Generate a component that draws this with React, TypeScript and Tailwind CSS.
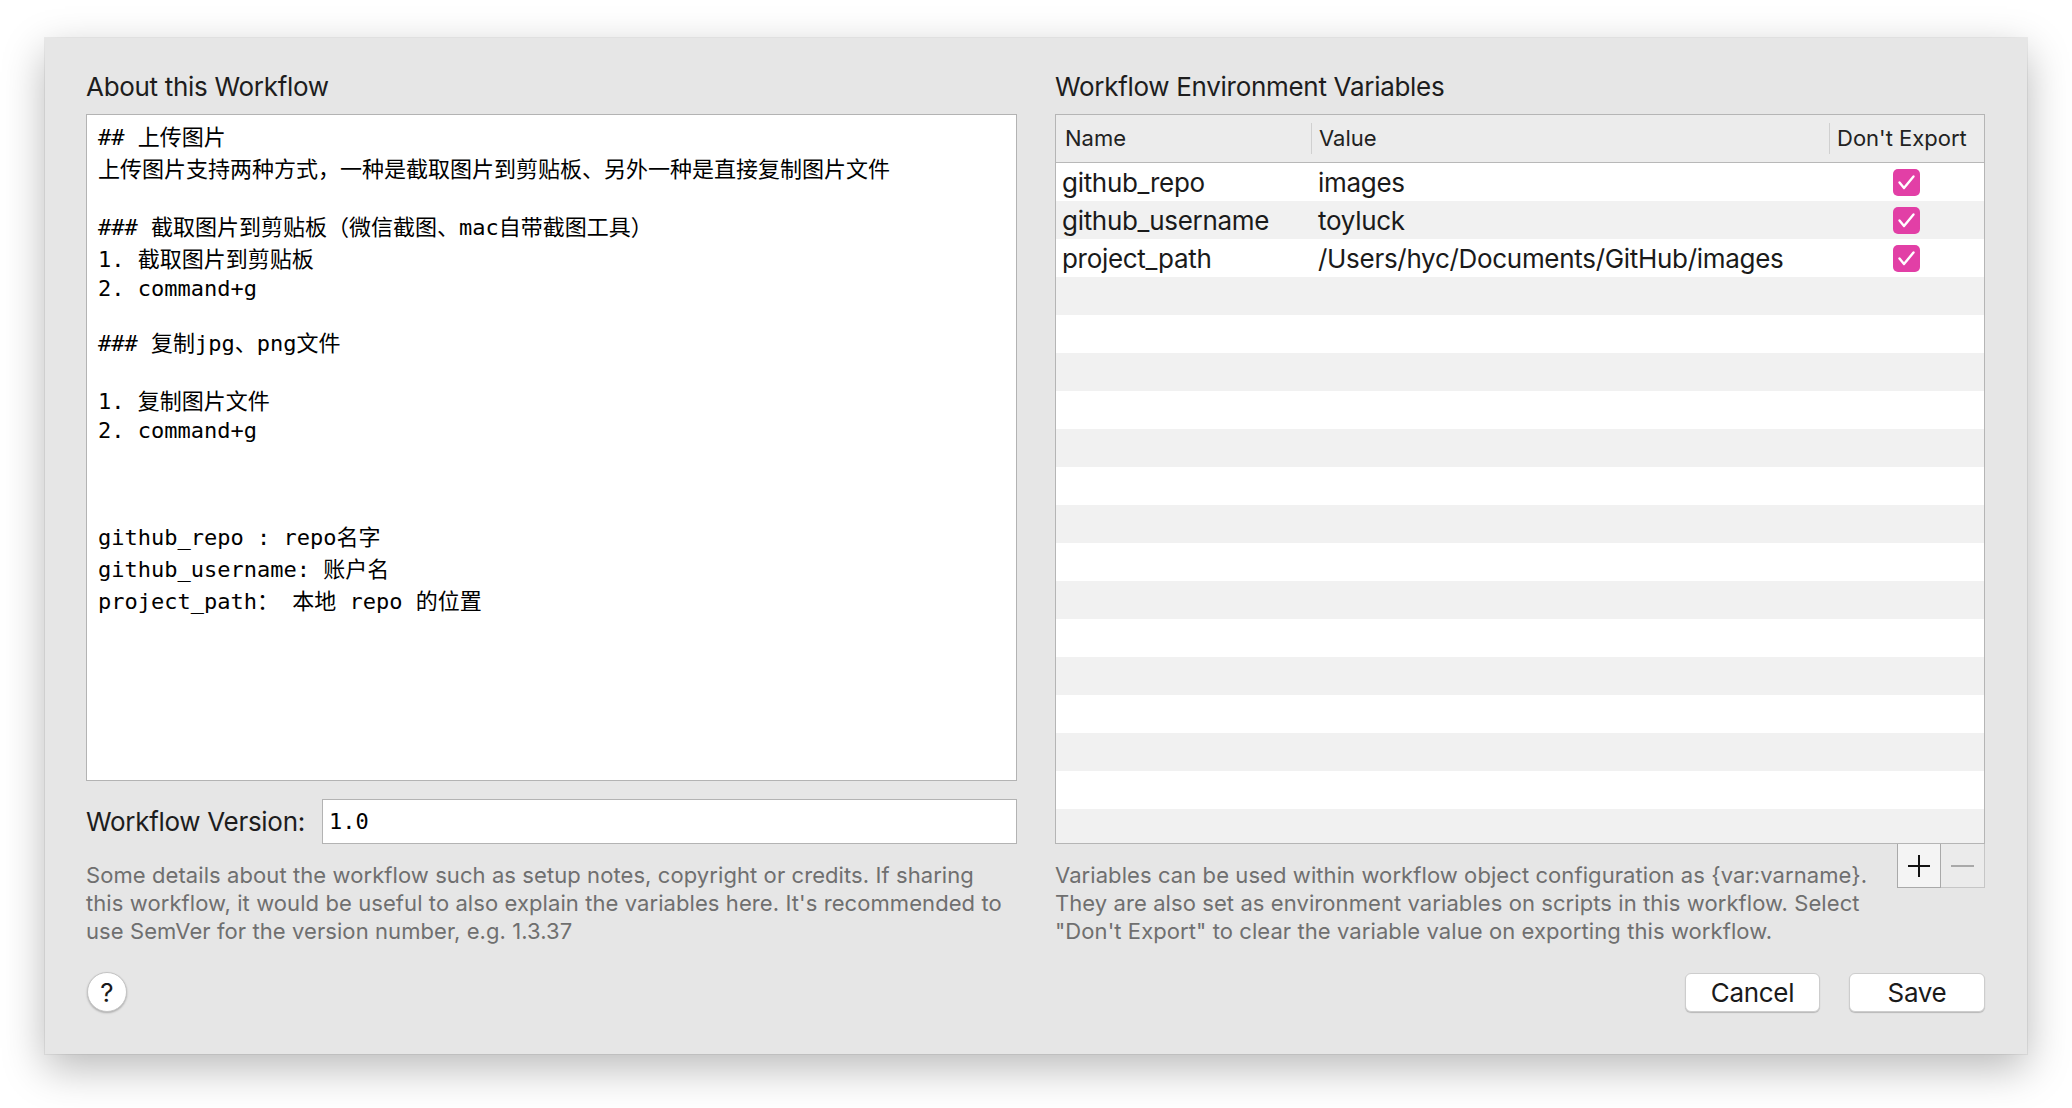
const ui = { fontFamily: 'Inter, "Noto Sans", sans-serif' };
const mono = { fontFamily: '"DejaVu Sans Mono", "Noto Sans CJK SC", monospace' };

const aboutLines = [
  "## 上传图片",
  "上传图片支持两种方式，一种是截取图片到剪贴板、另外一种是直接复制图片文件",
  "",
  "### 截取图片到剪贴板（微信截图、mac自带截图工具）",
  "1. 截取图片到剪贴板",
  "2. command+g",
  "",
  "### 复制jpg、png文件",
  "",
  "1. 复制图片文件",
  "2. command+g",
  "",
  "",
  "",
  "github_repo : repo名字",
  "github_username: 账户名",
  "project_path： 本地 repo 的位置",
];

const variables = [
  { name: "github_repo", value: "images" },
  { name: "github_username", value: "toyluck" },
  { name: "project_path", value: "/Users/hyc/Documents/GitHub/images" },
];

const hasCjk = (s: string) => /[\u3000-\u9fff\uff00-\uffef]/.test(s);

function Checkbox() {
  return (
    <div className="w-[27px] h-[27px] rounded-[5px] bg-[#e23fa6] flex items-center justify-center">
      <svg width="27" height="27" viewBox="0 0 27 27" fill="none">
        <path d="M6.5 13.5 L11 19 L20.5 7.5" stroke="white" strokeWidth="2.4" strokeLinecap="round" strokeLinejoin="round" />
      </svg>
    </div>
  );
}

export default function App() {
  const rows = Array.from({ length: 18 }, (_, i) => variables[i] ?? null);

  return (
    <div className="w-full h-[1108px] bg-white pt-[38px] pl-[45px] text-[#1d1d1d]" style={ui}>
      <div className="w-[1982px] h-[1016px] bg-[#e6e6e6] shadow-[0_14px_40px_rgba(0,0,0,0.28),0_0_0_1px_rgba(0,0,0,0.06)] pt-[32px] pl-[41px] pr-[42px] flex flex-col">
        <div className="grid grid-cols-[931px_930px] gap-x-[38px]">
          {/* left column */}
          <div className="flex flex-col">
            <h2 className="text-[26px] leading-[34px] h-[32px] mb-[12px] tracking-[-0.3px]">About this Workflow</h2>
            <div className="h-[667px] bg-white border border-[#b3b3b3] pt-[7px] pl-[11px] text-[22px] text-black overflow-hidden" style={mono}>
              {aboutLines.map((line, i) => (
                <div key={i} className={hasCjk(line) ? "h-[32px] leading-[32px] whitespace-pre" : "h-[26px] leading-[26px] whitespace-pre"}>
                  {line}
                </div>
              ))}
            </div>
            <div className="mt-[18px] flex items-center justify-between">
              <span className="text-[26px] tracking-[-0.3px]">Workflow Version:</span>
              <div className="w-[695px] h-[45px] bg-white border border-[#b3b3b3] flex items-center pl-[6px] text-[22px] text-black" style={mono}>
                1.0
              </div>
            </div>
            <p className="mt-[17px] text-[22px] leading-[28px] text-[#6f6f6f] tracking-[0.08px]">
              <span className="block whitespace-nowrap">Some details about the workflow such as setup notes, copyright or credits. If sharing</span>
              <span className="block whitespace-nowrap">this workflow, it would be useful to also explain the variables here. It's recommended to</span>
              <span className="block whitespace-nowrap">use SemVer for the version number, e.g. 1.3.37</span>
            </p>
          </div>

          {/* right column */}
          <div className="flex flex-col">
            <h2 className="text-[26px] leading-[34px] h-[32px] mb-[12px] tracking-[-0.3px]">Workflow Environment Variables</h2>
            <div className="h-[730px] border border-[#b5b5b5] bg-white overflow-hidden flex flex-col">
              <div className="h-[48px] shrink-0 bg-[#ececec] border-b border-[#b8b8b8] grid grid-cols-[255px_518px_1fr] text-[22px] text-[#222]">
                <div className="flex items-center pl-[9px]">Name</div>
                <div className="flex items-center pl-[8px] relative">
                  <span className="absolute left-0 top-[8px] bottom-[8px] w-px bg-[#d0d0d0]" />
                  Value
                </div>
                <div className="flex items-center pl-[8px] relative">
                  <span className="absolute left-0 top-[8px] bottom-[8px] w-px bg-[#d0d0d0]" />
                  Don't Export
                </div>
              </div>
              {rows.map((row, i) => (
                <div
                  key={i}
                  className={
                    i % 2 === 0
                      ? "h-[38px] shrink-0 bg-white grid grid-cols-[255px_518px_1fr] text-[26px] text-[#1a1a1a] tracking-[-0.3px]"
                      : "h-[38px] shrink-0 bg-[#f1f1f1] grid grid-cols-[255px_518px_1fr] text-[26px] text-[#1a1a1a] tracking-[-0.3px]"
                  }
                >
                  {row && (
                    <>
                      <div className="flex items-center pl-[6px] whitespace-nowrap">{row.name}</div>
                      <div className="flex items-center pl-[7px] whitespace-nowrap">{row.value}</div>
                      <div className="flex items-center justify-center">
                        <Checkbox />
                      </div>
                    </>
                  )}
                </div>
              ))}
            </div>
            <div className="flex justify-between items-start">
              <p className="mt-[17px] text-[22px] leading-[28px] text-[#6f6f6f] tracking-[0.08px]">
                <span className="block whitespace-nowrap">Variables can be used within workflow object configuration as {"{var:varname}"}.</span>
                <span className="block whitespace-nowrap">They are also set as environment variables on scripts in this workflow. Select</span>
                <span className="block whitespace-nowrap">"Don't Export" to clear the variable value on exporting this workflow.</span>
              </p>
              <div className="flex h-[44px] w-[88px]">
                <div className="w-[44px] h-full bg-[#f4f4f4] border border-t-0 border-[#a9a9a9] flex items-center justify-center">
                  <svg width="22" height="22" viewBox="0 0 22 22">
                    <path d="M11 0 V22 M0 11 H22" stroke="#111" strokeWidth="2" />
                  </svg>
                </div>
                <div className="w-[44px] h-full bg-[#ebebeb] border border-l-0 border-t-0 border-[#c6c6c6] flex items-center justify-center">
                  <svg width="23" height="22" viewBox="0 0 23 22">
                    <path d="M0 11 H23" stroke="#a9a9a9" strokeWidth="2" />
                  </svg>
                </div>
              </div>
            </div>
          </div>
        </div>

        {/* bottom bar */}
        <div className="mt-[27px] flex items-center justify-between pl-[1px]">
          <button className="w-[40px] h-[40px] rounded-full bg-white border border-[#c4c4c4] shadow-[0_1px_2px_rgba(0,0,0,0.25)] flex items-center justify-center text-[26px] text-[#1a1a1a]">
            ?
          </button>
          <div className="flex gap-[29px]">
            <button className="w-[135px] h-[39px] rounded-[6px] bg-white border border-[#cdcdcd] shadow-[0_1px_1px_rgba(0,0,0,0.2)] text-[26px] text-[#1a1a1a] tracking-[-0.3px] flex items-center justify-center">
              Cancel
            </button>
            <button className="w-[136px] h-[39px] rounded-[6px] bg-white border border-[#cdcdcd] shadow-[0_1px_1px_rgba(0,0,0,0.2)] text-[26px] text-[#1a1a1a] tracking-[-0.3px] flex items-center justify-center">
              Save
            </button>
          </div>
        </div>
      </div>
    </div>
  );
}
